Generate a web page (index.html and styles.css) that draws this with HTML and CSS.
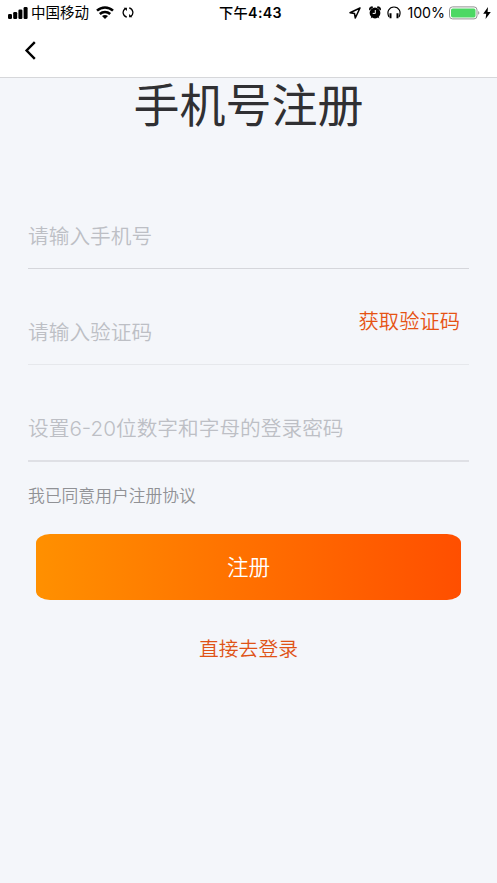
FILE: index.html
```html
<!DOCTYPE html>
<html lang="zh-CN">
<head>
<meta charset="utf-8">
<title>手机号注册</title>
<link rel="stylesheet" href="styles.css">
</head>
<body>
<div class="status">
  <div class="status-left">
    <svg class="signal" width="20" height="12" viewBox="0 0 20 12"><rect x="0" y="7" width="4" height="5" rx="1.2"/><rect x="5.2" y="5" width="4" height="7" rx="1.2"/><rect x="10.4" y="2.5" width="4" height="9.5" rx="1.2"/><rect x="15.6" y="0" width="4" height="12" rx="1.2"/></svg>
    <span class="carrier">中国移动</span>
    <svg class="wifi" width="18" height="13" viewBox="0 0 18 13" fill="none" stroke="#000" stroke-width="2.5"><path d="M1 4.700C5.600.3 12.400.3 17 4.700"/><path d="M3.800 8c3-2.800 7.400-2.800 10.400 0"/><path d="M6 10c1.700-1.500 4.300-1.500 6 0L9 12.900z" fill="#000" stroke="none"/></svg>
    <svg class="sync" width="12" height="13" viewBox="0 0 12 13" fill="none" stroke="#000" stroke-width="1.3"><path d="M4.800 11.200A4.800 4.800 0 0 1 3.200 2.600M7.200 1.800A4.800 4.800 0 0 1 8.800 10.400"/><path d="M1.700 1.800h3.200v3.200zM10.300 11.200H7.100V8z" fill="#000" stroke="none"/></svg>
  </div>
  <div class="time">下午<span class="digits">4:43</span></div>
  <div class="status-right">
    <svg class="locate" width="12" height="12" viewBox="0 0 12 12" fill="none" stroke="#000" stroke-width="1.5" stroke-linejoin="round"><path d="M11 1 1 5.700l4.500.8.8 4.500z"/></svg>
    <svg class="alarm" width="12" height="13" viewBox="0 0 12 13"><circle cx="6" cy="7" r="5.400"/><path d="M.5 4C-.3 1.700 2 .1 3.900 1.100zM11.500 4c.8-2.300-1.500-3.900-3.400-2.900zM2 12.200 3 10.700M10 12.200 9 10.700" stroke="#000" stroke-width=".8"/><path d="M6.300 4v3.400H3.700" fill="none" stroke="#fff" stroke-width="1"/></svg>
    <svg class="phones" width="14" height="13" viewBox="0 0 14 13" fill="none" stroke="#000"><path d="M2 11C-.7 5.800 2.200 1 7 1s7.700 4.800 5 10" stroke-width="1.200"/><path d="M3.500 7.200v5M10.500 7.200v5" stroke-width="2"/></svg>
    <span class="percent">100%</span>
    <svg class="battery" width="32" height="14" viewBox="0 0 32 14"><rect x=".5" y=".9" width="27.500" height="12" rx="3" fill="#fff" stroke="#929292"/><rect x="2" y="2.400" width="24.500" height="9" rx="1.700" fill="#4cd864"/><path d="M29.200 5c1.500.5 1.500 3.300 0 3.800z" fill="#929292"/></svg>
    <svg class="bolt" width="8" height="12" viewBox="0 0 8 12"><path d="M5 0 .2 6.700h3L2.600 12 7.800 4.900H4.600z"/></svg>
  </div>
</div>
<header class="nav">
  <svg class="back" width="12" height="20" viewBox="0 0 12 20" fill="none" stroke="#000" stroke-width="2.400"><path d="M10.800 1.200 2.600 9.500l8.200 8.300"/></svg>
</header>
<main class="page">
  <h1 class="title">手机号注册</h1>
  <form class="form">
    <div class="field"><span class="hint">请输入手机号</span></div>
    <div class="field field-code"><span class="hint">请输入验证码</span><a class="get-code">获取验证码</a></div>
    <div class="field field-password"><span class="hint">设置6-20位数字和字母的登录密码</span></div>
    <p class="agreement">我已同意用户注册协议</p>
    <button class="submit" type="button">注册</button>
  </form>
  <a class="login">直接去登录</a>
</main>
</body>
</html>
```
FILE: styles.css
```css
* { box-sizing: border-box; }
body {
  margin: 0;
  min-height: 883px;
  background: #f4f6fa;
  color: #000;
  font-family: Inter, "Noto Sans CJK SC", sans-serif;
  overflow: hidden;
}
svg { display: block; flex: none; }
.status {
  display: grid;
  grid-template-columns: 1fr auto 1fr;
  height: 26px;
  padding: 0 6px 0 8px;
  background: #fff;
  font-size: 14.5px;
  line-height: 26px;
  white-space: nowrap;
}
.status-left, .status-right { display: flex; align-items: center; height: 25px; }
.status-right { justify-content: flex-end; }
.carrier { margin-left: 3px; }
.wifi { margin-left: 7px; }
.sync { margin-left: 8px; }
.time { padding-left: 2px; font-size: 14.2px; font-weight: 500; letter-spacing: .35px; }
.digits { font-weight: 600; }
.alarm { margin-left: 8px; }
.phones { margin-left: 6px; }
.percent { margin-left: 6px; font-size: 14.2px; }
.battery { margin-left: 4px; }
.bolt { margin-left: 2px; }
.nav {
  height: 52px;
  padding: 15px 0 0 24px;
  background: #fff;
  border-bottom: 1px solid #d6d7da;
}
.page { display: flex; flex-direction: column; }
.title {
  margin: 0;
  height: 56px;
  line-height: 54px;
  text-align: center;
  font-size: 46px;
  font-weight: 400;
  color: #303033;
}
.form { display: flex; flex-direction: column; margin: 69px 28px 0; }
.field {
  display: flex;
  align-items: center;
  justify-content: space-between;
  height: 66px;
  padding-bottom: 2px;
  border-bottom: 1px solid #d5d6db;
}
.field-code { height: 96px; padding-top: 30px; border-color: #e6e8ec; }
.field-password { height: 97px; padding-top: 30px; border-width: 2px; border-color: #dfe0e5; }
.hint { font-size: 20.7px; font-weight: 350; color: #bdbfc5; }
.get-code { margin: -21px 9px 0 0; font-size: 20.3px; font-weight: 350; color: #e65314; }
.agreement { margin: 22px 0 0; height: 25px; line-height: 25px; font-size: 16.8px; font-weight: 350; color: #909195; }
.submit {
  height: 66px;
  margin: 25px 8px 0;
  padding: 0 0 4px;
  border: 0;
  border-radius: 14px / 9px;
  background: linear-gradient(90deg, #ff9000, #ff4f00);
  color: #fff;
  font: inherit;
  font-size: 21.6px;
  font-weight: 350;
}
.login { align-self: center; margin-top: 34px; line-height: 30px; font-size: 19.8px; font-weight: 350; color: #df5316; }
```
